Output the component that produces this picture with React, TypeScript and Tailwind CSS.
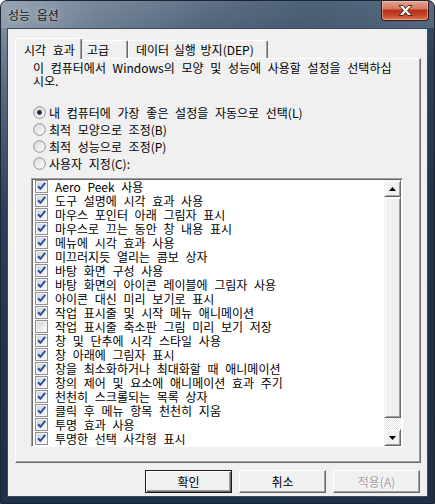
import React from 'react';

const items: { label: string; checked: boolean }[] = [
  { label: 'Aero Peek 사용', checked: true },
  { label: '도구 설명에 시각 효과 사용', checked: true },
  { label: '마우스 포인터 아래 그림자 표시', checked: true },
  { label: '마우스로 끄는 동안 창 내용 표시', checked: true },
  { label: '메뉴에 시각 효과 사용', checked: true },
  { label: '미끄러지듯 열리는 콤보 상자', checked: true },
  { label: '바탕 화면 구성 사용', checked: true },
  { label: '바탕 화면의 아이콘 레이블에 그림자 사용', checked: true },
  { label: '아이콘 대신 미리 보기로 표시', checked: true },
  { label: '작업 표시줄 및 시작 메뉴 애니메이션', checked: true },
  { label: '작업 표시줄 축소판 그림 미리 보기 저장', checked: false },
  { label: '창 및 단추에 시각 스타일 사용', checked: true },
  { label: '창 아래에 그림자 표시', checked: true },
  { label: '창을 최소화하거나 최대화할 때 애니메이션', checked: true },
  { label: '창의 제어 및 요소에 애니메이션 효과 주기', checked: true },
  { label: '천천히 스크롤되는 목록 상자', checked: true },
  { label: '클릭 후 메뉴 항목 천천히 지움', checked: true },
  { label: '투명 효과 사용', checked: true },
  { label: '투명한 선택 사각형 표시', checked: true },
];

const radios = [
  '내 컴퓨터에 가장 좋은 설정을 자동으로 선택(L)',
  '최적 모양으로 조정(B)',
  '최적 성능으로 조정(P)',
  '사용자 지정(C):',
];

function CheckBox({ checked }: { checked: boolean }) {
  return (
    <svg width="13" height="13" viewBox="0 0 13 13" className="shrink-0">
      <defs>
        <linearGradient id="cbg" x1="0" y1="0" x2="1" y2="1">
          <stop offset="0" stopColor="#cfd3d8" />
          <stop offset="1" stopColor="#fbfbfb" />
        </linearGradient>
      </defs>
      <rect x="0.5" y="0.5" width="12" height="12" fill="#f4f4f4" stroke="#8e8f8f" />
      <rect x="2" y="2" width="9" height="9" fill="url(#cbg)" />
      {checked && (
        <path d="M3 6.2 L5.4 8.8 L10.2 2.8" fill="none" stroke="#2c4f9c" strokeWidth="2" />
      )}
    </svg>
  );
}

function Radio({ checked }: { checked: boolean }) {
  return (
    <svg width="13" height="13" viewBox="0 0 13 13" className="shrink-0">
      <defs>
        <linearGradient id="rbg" x1="0" y1="0" x2="1" y2="1">
          <stop offset="0" stopColor="#d6d8dc" />
          <stop offset="1" stopColor="#ffffff" />
        </linearGradient>
      </defs>
      <circle cx="6.5" cy="6.5" r="5.8" fill="url(#rbg)" stroke="#8e8f8f" />
      {checked && <circle cx="6.5" cy="6.5" r="2.4" fill="#1c2a3c" />}
    </svg>
  );
}

function ScrollButton({ down }: { down?: boolean }) {
  return (
    <div className="w-[17px] h-[17px] shrink-0 bg-[#f0f0f0] border-t border-l border-[#f0f0f0] border-r border-b border-r-[#696969] border-b-[#696969] shadow-[inset_1px_1px_0_#ffffff,inset_-1px_-1px_0_#a0a0a0] flex items-center justify-center">
      <svg width="7" height="4" viewBox="0 0 7 4">
        {down ? <path d="M0 0 H7 L3.5 4 Z" fill="#000" /> : <path d="M0 4 H7 L3.5 0 Z" fill="#000" />}
      </svg>
    </div>
  );
}

function Button({ label, primary, disabled }: { label: string; primary?: boolean; disabled?: boolean }) {
  return (
    <div
      className={
        'w-[87px] h-[23px] flex items-center justify-center bg-[#f0f0f0] text-[12px] ' +
        (primary
          ? 'border border-[#1a1a1a] shadow-[inset_1px_1px_0_#ffffff,inset_-1px_-1px_0_#696969,inset_-2px_-2px_0_#a0a0a0]'
          : 'border border-t-white border-l-white border-r-[#696969] border-b-[#696969] shadow-[inset_-1px_-1px_0_#a0a0a0]') +
        (disabled ? ' text-[#a0a0a0] [text-shadow:1px_1px_0_#ffffff]' : ' text-black')
      }
    >
      {label}
    </div>
  );
}

export default function App() {
  return (
    <div
      className="w-[435px] h-[504px] flex flex-col rounded-t-[7px] border border-[#1b2433] bg-[linear-gradient(160deg,#8b9aab_0%,#56697f_14%,#2a405a_32%,#1e334c_55%,#1c2f47_100%)] overflow-hidden [word-spacing:4px]"
      style={{ fontFamily: '"Noto Sans CJK KR", "Noto Sans", sans-serif' }}
    >
      {/* Title bar */}
      <div className="h-[27px] flex items-start shrink-0 bg-[linear-gradient(to_right,rgba(160,172,186,0.55)_0%,rgba(120,138,158,0.25)_22%,rgba(0,0,0,0)_45%,rgba(0,0,0,0)_70%,rgba(120,140,162,0.45)_100%)]">
        <span className="pl-[7px] pt-[7px] text-[12px] leading-[14px] text-[#1a1a1a] [text-shadow:0_0_6px_rgba(255,255,255,0.75)]">
          성능 옵션
        </span>
        <div className="ml-auto mr-[5px] w-[48px] h-[20px] rounded-b-[4px] border border-t-0 border-[#3a1610] bg-[linear-gradient(to_bottom,#e4a493_0%,#d27a64_40%,#b8321c_50%,#c4462a_75%,#de7a4c_100%)] shadow-[inset_0_0_0_1px_rgba(255,220,200,0.45)] flex items-center justify-center">
          <svg width="17" height="13" viewBox="0 0 17 13">
            <path
              d="M2 1.5 H6 L8.5 4.5 L11 1.5 H15 L10.5 6.5 L15 11.5 H11 L8.5 8.5 L6 11.5 H2 L6.5 6.5 Z"
              fill="#ffffff"
              stroke="#4a2a22"
              strokeWidth="1"
              strokeLinejoin="round"
            />
          </svg>
        </div>
      </div>

      {/* Client area */}
      <div className="mx-[6px] h-[469px] shrink-0 border border-[#3b4b5e] bg-[#f0f0f0] flex flex-col text-[12px] text-black">
        {/* Tabs */}
        <div className="flex items-end pl-[7px] pt-[8px] h-[29px] relative z-10 whitespace-nowrap">
          <div className="h-[21px] -mb-px w-[67px] pl-[8px] pt-[2px] bg-[#f0f0f0] border-t border-l border-white border-r border-r-[#696969] rounded-t-[2px] shadow-[inset_-1px_0_0_#a0a0a0]">
            시각 효과
          </div>
          <div className="h-[18px] w-[46px] pl-[5px] leading-[17px] border-t border-white border-r border-r-[#696969] rounded-tr-[2px] shadow-[inset_-1px_0_0_#a0a0a0]">
            고급
          </div>
          <div className="h-[18px] w-[140px] pl-[7px] leading-[17px] border-t border-l border-white border-r border-r-[#696969] rounded-t-[2px] shadow-[inset_-1px_0_0_#a0a0a0] [word-spacing:2px]">
            데이터 실행 방지(DEP)
          </div>
        </div>

        {/* Tab panel */}
        <div className="ml-[7px] w-[406px] h-[405px] border border-t-white border-l-white border-r-[#696969] border-b-[#696969] shadow-[inset_-1px_-1px_0_#a0a0a0] pl-[17px] pt-[2px] flex flex-col">
          <p className="leading-[13px] whitespace-nowrap">
            이 컴퓨터에서 Windows의 모양 및 성능에 사용할 설정을 선택하십
            <br />
            시오.
          </p>

          <div className="mt-[17px] flex flex-col">
            {radios.map((r, i) => (
              <div key={r} className="h-[17px] flex items-center gap-[3px]">
                <Radio checked={i === 0} />
                <span className="leading-[14px] whitespace-nowrap">{r}</span>
              </div>
            ))}
          </div>

          {/* List */}
          <div className="mt-[6px] -ml-[2px] w-[372px] h-[269px] border border-t-[#a0a0a0] border-l-[#a0a0a0] border-r-white border-b-white shadow-[inset_1px_1px_0_#696969] bg-white flex">
            <div className="flex-1 pl-[3px] flex flex-col">
              {items.map((it) => (
                <div key={it.label} className="h-[14px] flex items-center gap-[7px]">
                  <CheckBox checked={it.checked} />
                  <span className="leading-[13px] whitespace-nowrap">{it.label}</span>
                </div>
              ))}
            </div>
            <div className="w-[17px] mr-px mt-px flex flex-col">
              <ScrollButton />
              <div className="h-[221px] shrink-0 bg-[#f0f0f0] border border-t-[#f0f0f0] border-l-[#f0f0f0] border-r-[#696969] border-b-[#696969] shadow-[inset_1px_1px_0_#ffffff,inset_-1px_-1px_0_#a0a0a0]" />
              <div className="flex-1 bg-[repeating-conic-gradient(#ffffff_0_25%,#e4e4e4_0_50%)] bg-[length:2px_2px]" />
              <ScrollButton down />
            </div>
          </div>
        </div>

        {/* Buttons */}
        <div className="flex justify-end gap-[7px] pr-[7px] pt-[7px]">
          <Button label="확인" primary />
          <Button label="취소" />
          <Button label="적용(A)" disabled />
        </div>
      </div>
    </div>
  );
}
